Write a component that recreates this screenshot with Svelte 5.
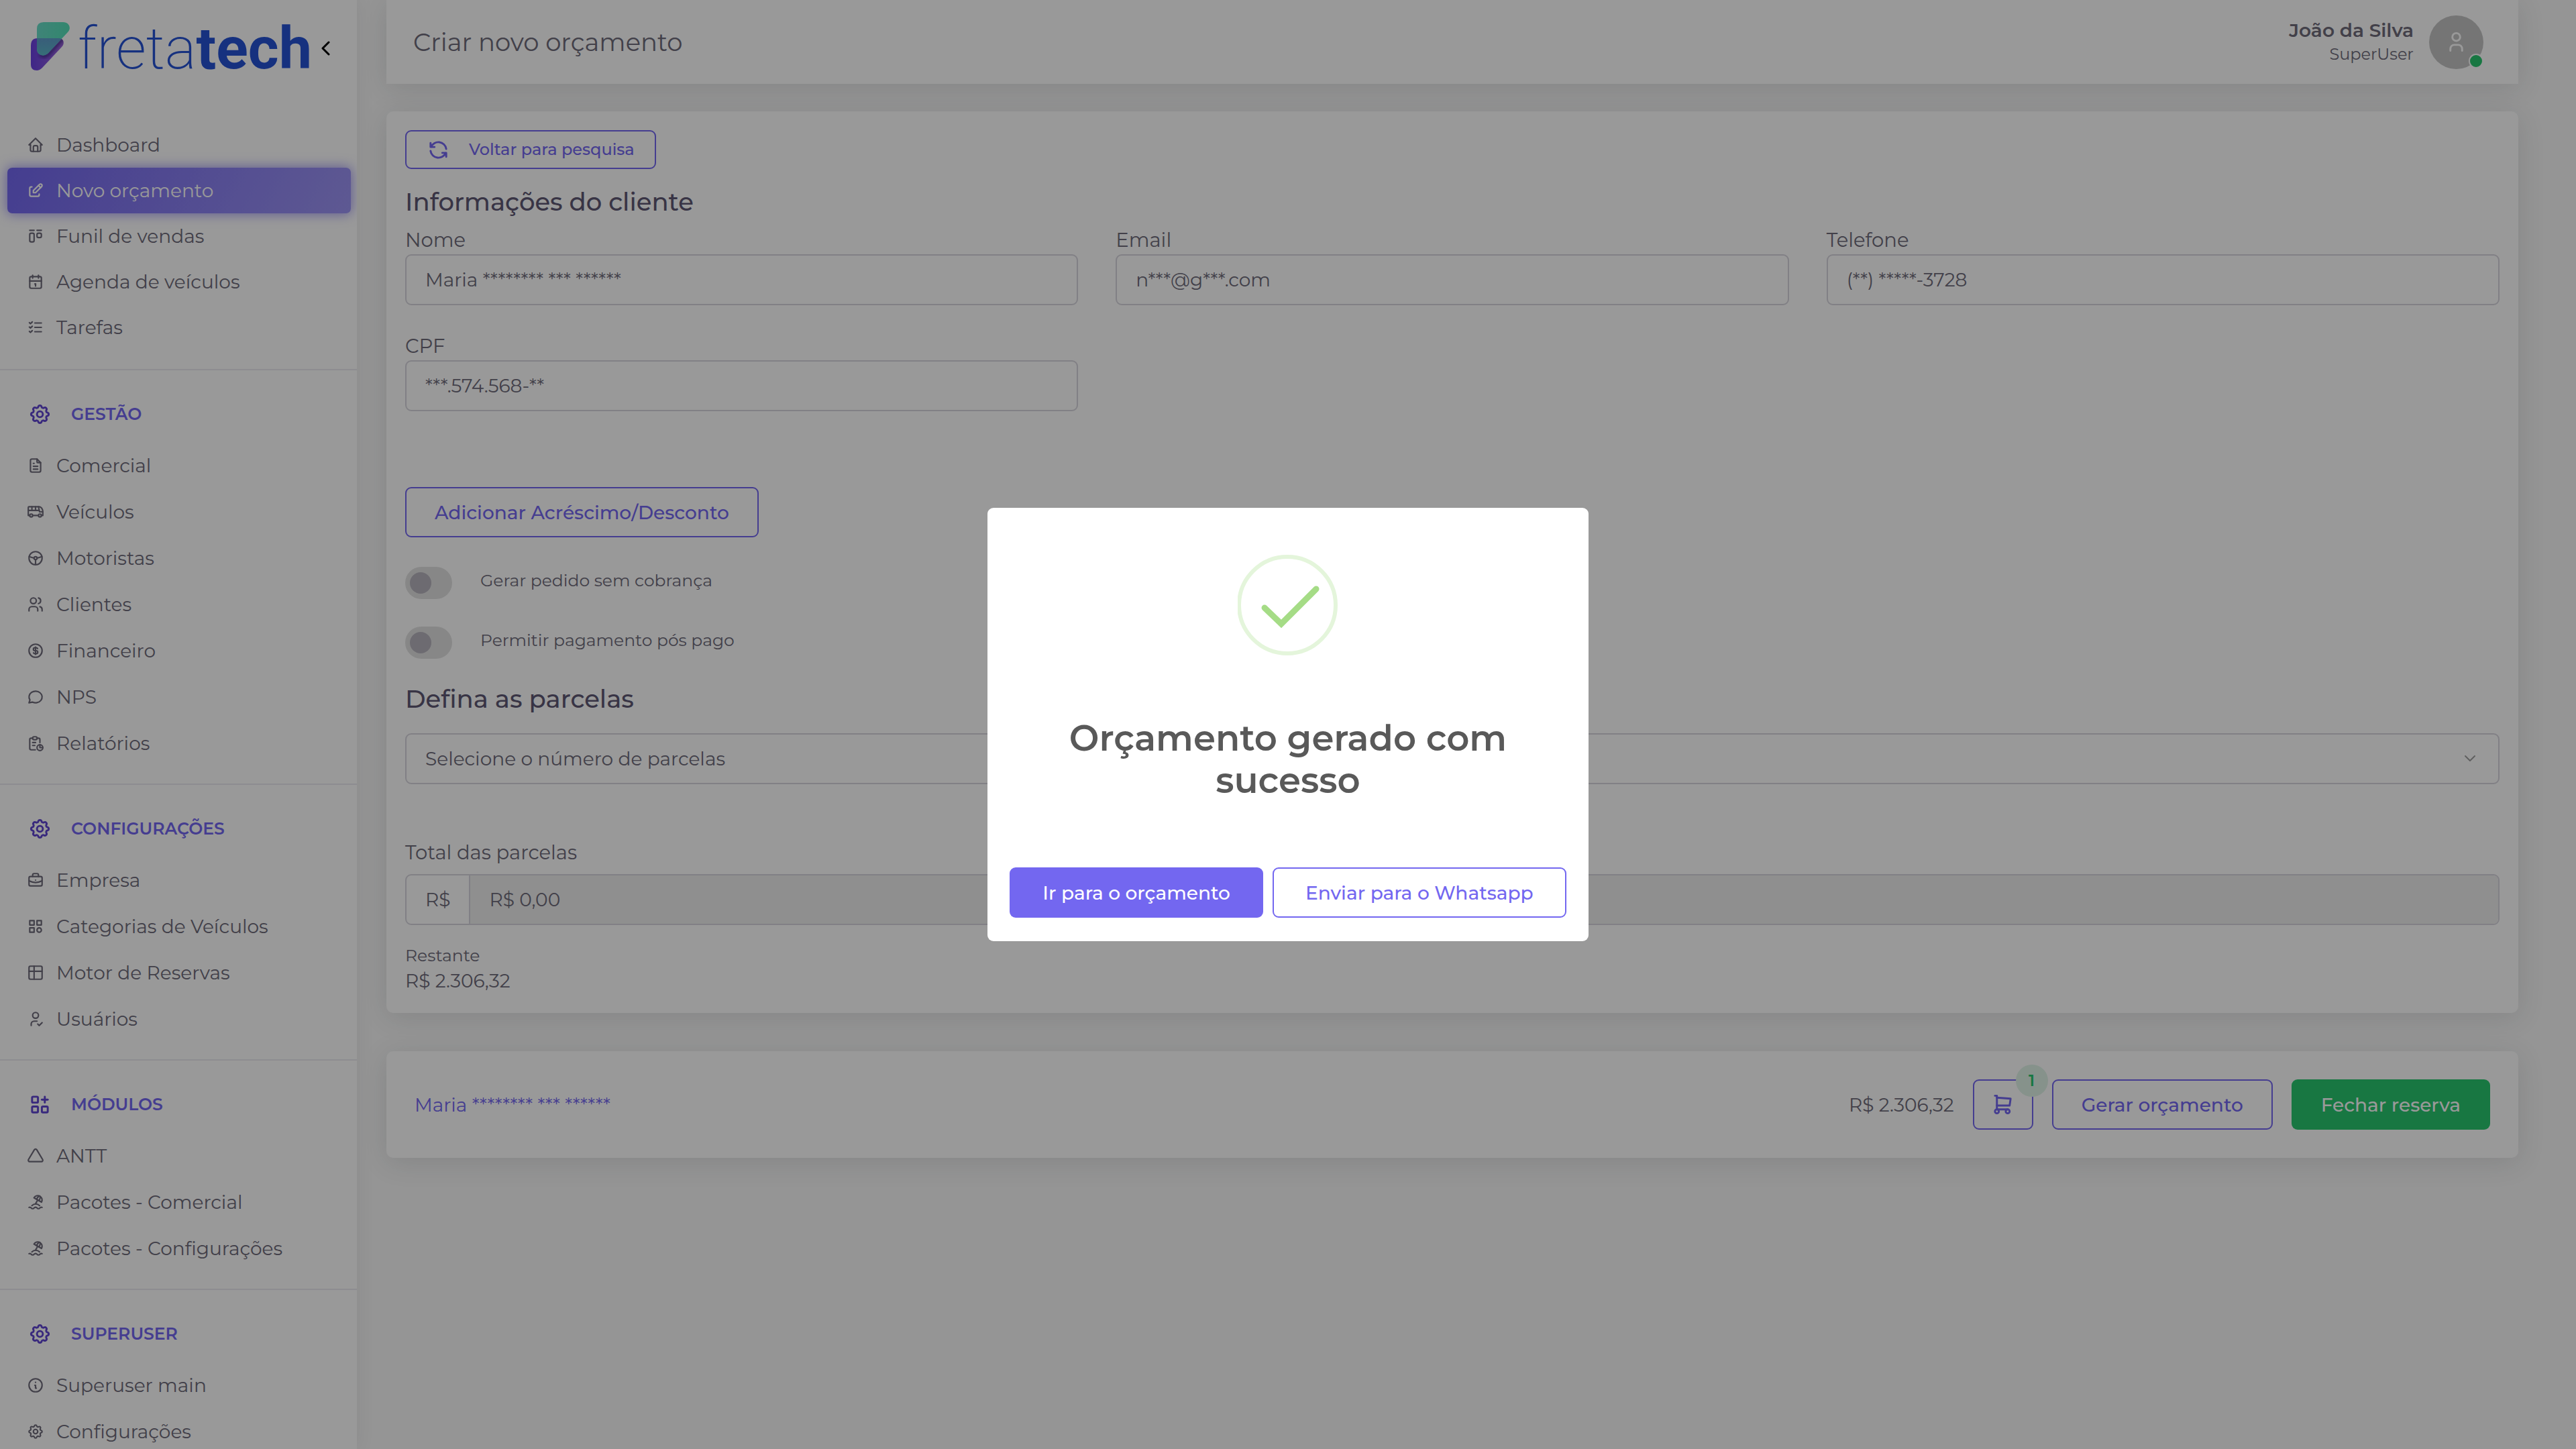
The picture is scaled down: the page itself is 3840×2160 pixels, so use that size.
<script lang="ts">
  type NavItem = { label: string; icon: string; href: string };
  type NavSection = { title: string; icon: string; items: NavItem[] };

  const icons: Record<string, string[]> = {
    home: ['M5 12h-2l9 -9l9 9h-2', 'M5 12v7a2 2 0 0 0 2 2h10a2 2 0 0 0 2 -2v-7', 'M9 21v-6a2 2 0 0 1 2 -2h2a2 2 0 0 1 2 2v6'],
    edit: ['M7 7h-1a2 2 0 0 0 -2 2v9a2 2 0 0 0 2 2h9a2 2 0 0 0 2 -2v-1', 'M20.385 6.585a2.1 2.1 0 0 0 -2.97 -2.97l-8.415 8.385v3h3l8.385 -8.415z', 'M16 5l3 3'],
    kanban: ['M4 4h6', 'M14 4h6', 'M4 10a2 2 0 0 1 2 -2h2a2 2 0 0 1 2 2v8a2 2 0 0 1 -2 2h-2a2 2 0 0 1 -2 -2z', 'M14 10a2 2 0 0 1 2 -2h2a2 2 0 0 1 2 2v2a2 2 0 0 1 -2 2h-2a2 2 0 0 1 -2 -2z'],
    calendar: ['M4 7a2 2 0 0 1 2 -2h12a2 2 0 0 1 2 2v12a2 2 0 0 1 -2 2h-12a2 2 0 0 1 -2 -2z', 'M16 3v4', 'M8 3v4', 'M4 11h16', 'M11 15h1', 'M12 15v3'],
    tasks: ['M3.5 5.5l1.5 1.5l2.5 -2.5', 'M3.5 11.5l1.5 1.5l2.5 -2.5', 'M3.5 17.5l1.5 1.5l2.5 -2.5', 'M11 6h9', 'M11 12h9', 'M11 18h9'],
    settings: ['M10.325 4.317c.426 -1.756 2.924 -1.756 3.35 0a1.724 1.724 0 0 0 2.573 1.066c1.543 -.94 3.31 .826 2.37 2.37a1.724 1.724 0 0 0 1.065 2.572c1.756 .426 1.756 2.924 0 3.35a1.724 1.724 0 0 0 -1.066 2.573c.94 1.543 -.826 3.31 -2.37 2.37a1.724 1.724 0 0 0 -2.572 1.065c-.426 1.756 -2.924 1.756 -3.35 0a1.724 1.724 0 0 0 -2.573 -1.066c-1.543 .94 -3.31 -.826 -2.37 -2.37a1.724 1.724 0 0 0 -1.065 -2.572c-1.756 -.426 -1.756 -2.924 0 -3.35a1.724 1.724 0 0 0 1.066 -2.573c-.94 -1.543 .826 -3.31 2.37 -2.37c1 .608 2.296 .07 2.572 -1.065z', 'M9 12a3 3 0 1 0 6 0a3 3 0 0 0 -6 0'],
    file: ['M14 3v4a1 1 0 0 0 1 1h4', 'M17 21h-10a2 2 0 0 1 -2 -2v-14a2 2 0 0 1 2 -2h7l5 5v11a2 2 0 0 1 -2 2z', 'M9 9h1', 'M9 13h6', 'M9 17h6'],
    bus: ['M4 17a2 2 0 1 0 4 0a2 2 0 1 0 -4 0', 'M16 17a2 2 0 1 0 4 0a2 2 0 1 0 -4 0', 'M4 17h-2v-11a1 1 0 0 1 1 -1h14a5 7 0 0 1 5 7v5h-2m-4 0h-8', 'M16 5l1.5 7h4.5', 'M2 10h15', 'M7 5v5', 'M12 5v5'],
    wheel: ['M3 12a9 9 0 1 0 18 0a9 9 0 1 0 -18 0', 'M10 12a2 2 0 1 0 4 0a2 2 0 1 0 -4 0', 'M12 14v7', 'M10 12l-6.75 -2', 'M14 12l6.75 -2'],
    users: ['M5 7a4 4 0 1 0 8 0a4 4 0 1 0 -8 0', 'M3 21v-2a4 4 0 0 1 4 -4h4a4 4 0 0 1 4 4v2', 'M16 3.13a4 4 0 0 1 0 7.75', 'M21 21v-2a4 4 0 0 0 -3 -3.85'],
    coin: ['M3 12a9 9 0 1 0 18 0a9 9 0 1 0 -18 0', 'M14.8 9a2 2 0 0 0 -1.8 -1h-2a2 2 0 1 0 0 4h2a2 2 0 1 1 0 4h-2a2 2 0 0 1 -1.8 -1', 'M12 7v10'],
    message: ['M3 20l1.3 -3.9c-2.324 -3.437 -1.426 -7.872 2.1 -10.374c3.526 -2.501 8.59 -2.296 11.845 .48c3.255 2.777 3.695 7.266 1.029 10.501c-2.666 3.235 -7.615 4.215 -11.574 2.293l-4.7 1'],
    report: ['M8 5h-2a2 2 0 0 0 -2 2v12a2 2 0 0 0 2 2h5.697', 'M18 14v4h4', 'M18 11v-4a2 2 0 0 0 -2 -2h-2', 'M8 5a2 2 0 0 1 2 -2h2a2 2 0 0 1 0 4h-2a2 2 0 0 1 -2 -2z', 'M14 18a4 4 0 1 0 8 0a4 4 0 1 0 -8 0', 'M8 11h4', 'M8 15h3'],
    briefcase: ['M3 9a2 2 0 0 1 2 -2h14a2 2 0 0 1 2 2v9a2 2 0 0 1 -2 2h-14a2 2 0 0 1 -2 -2z', 'M8 7v-2a2 2 0 0 1 2 -2h4a2 2 0 0 1 2 2v2', 'M12 12v.01', 'M3 13a20 20 0 0 0 18 0'],
    category: ['M4 4h6v6h-6z', 'M14 4h6v6h-6z', 'M4 14h6v6h-6z', 'M14 17a3 3 0 1 0 6 0a3 3 0 1 0 -6 0'],
    table: ['M3 5a2 2 0 0 1 2 -2h14a2 2 0 0 1 2 2v14a2 2 0 0 1 -2 2h-14a2 2 0 0 1 -2 -2v-14z', 'M3 10h18', 'M10 3v18'],
    userCheck: ['M8 7a4 4 0 1 0 8 0a4 4 0 0 0 -8 0', 'M6 21v-2a4 4 0 0 1 4 -4h4', 'M15 19l2 2l4 -4'],
    gridAdd: ['M4 5a1 1 0 0 1 1 -1h4a1 1 0 0 1 1 1v4a1 1 0 0 1 -1 1h-4a1 1 0 0 1 -1 -1z', 'M4 15a1 1 0 0 1 1 -1h4a1 1 0 0 1 1 1v4a1 1 0 0 1 -1 1h-4a1 1 0 0 1 -1 -1z', 'M14 15a1 1 0 0 1 1 -1h4a1 1 0 0 1 1 1v4a1 1 0 0 1 -1 1h-4a1 1 0 0 1 -1 -1z', 'M14 7h6', 'M17 4v6'],
    triangle: ['M10.363 3.591l-8.106 13.534a1.914 1.914 0 0 0 1.636 2.871h16.214a1.914 1.914 0 0 0 1.636 -2.87l-8.106 -13.536a1.914 1.914 0 0 0 -3.274 0z'],
    beach: ['M17.553 16.75a7.5 7.5 0 0 0 -10.606 0', 'M18 3.804a6 6 0 0 0 -8.196 2.196l10.392 6a6 6 0 0 0 -2.196 -8.196z', 'M16.732 10c1.658 -2.87 2.225 -5.644 1.268 -6.196c-.957 -.552 -3.075 1.326 -4.732 4.196', 'M15 9l-3 5.196', 'M3 19.25a2.4 2.4 0 0 1 1 -.25a2.4 2.4 0 0 1 2 1a2.4 2.4 0 0 0 2 1a2.4 2.4 0 0 0 2 -1a2.4 2.4 0 0 1 2 -1a2.4 2.4 0 0 1 2 1a2.4 2.4 0 0 0 2 1a2.4 2.4 0 0 0 2 -1a2.4 2.4 0 0 1 2 -1a2.4 2.4 0 0 1 1 .25'],
    info: ['M3 12a9 9 0 1 0 18 0a9 9 0 1 0 -18 0', 'M12 8h.01', 'M11 12h1v4h1'],
    refresh: ['M20 11a8.1 8.1 0 0 0 -15.5 -2m-.5 -4v4h4', 'M4 13a8.1 8.1 0 0 0 15.5 2m.5 4v-4h-4'],
    cart: ['M4 19a2 2 0 1 0 4 0a2 2 0 1 0 -4 0', 'M15 19a2 2 0 1 0 4 0a2 2 0 1 0 -4 0', 'M17 17h-11v-14h-2', 'M6 5l14 1l-1 7h-13'],
    user: ['M8 7a4 4 0 1 0 8 0a4 4 0 0 0 -8 0', 'M6 21v-2a4 4 0 0 1 4 -4h4a4 4 0 0 1 4 4v2'],
  };

  const mainItems: NavItem[] = [
    { label: 'Dashboard', icon: 'home', href: '#dashboard' },
    { label: 'Novo orçamento', icon: 'edit', href: '#novo-orcamento' },
    { label: 'Funil de vendas', icon: 'kanban', href: '#funil' },
    { label: 'Agenda de veículos', icon: 'calendar', href: '#agenda' },
    { label: 'Tarefas', icon: 'tasks', href: '#tarefas' },
  ];

  const sections: NavSection[] = [
    {
      title: 'GESTÃO',
      icon: 'settings',
      items: [
        { label: 'Comercial', icon: 'file', href: '#comercial' },
        { label: 'Veículos', icon: 'bus', href: '#veiculos' },
        { label: 'Motoristas', icon: 'wheel', href: '#motoristas' },
        { label: 'Clientes', icon: 'users', href: '#clientes' },
        { label: 'Financeiro', icon: 'coin', href: '#financeiro' },
        { label: 'NPS', icon: 'message', href: '#nps' },
        { label: 'Relatórios', icon: 'report', href: '#relatorios' },
      ],
    },
    {
      title: 'CONFIGURAÇÕES',
      icon: 'settings',
      items: [
        { label: 'Empresa', icon: 'briefcase', href: '#empresa' },
        { label: 'Categorias de Veículos', icon: 'category', href: '#categorias' },
        { label: 'Motor de Reservas', icon: 'table', href: '#motor' },
        { label: 'Usuários', icon: 'userCheck', href: '#usuarios' },
      ],
    },
    {
      title: 'MÓDULOS',
      icon: 'gridAdd',
      items: [
        { label: 'ANTT', icon: 'triangle', href: '#antt' },
        { label: 'Pacotes - Comercial', icon: 'beach', href: '#pacotes' },
        { label: 'Pacotes - Configurações', icon: 'beach', href: '#pacotes-config' },
      ],
    },
    {
      title: 'SUPERUSER',
      icon: 'settings',
      items: [
        { label: 'Superuser main', icon: 'info', href: '#superuser' },
        { label: 'Configurações', icon: 'settings', href: '#config' },
      ],
    },
  ];

  let active = $state('#novo-orcamento');
  let showModal = $state(true);
  let semCobranca = $state(false);
  let posPago = $state(false);

  let cliente = $state({
    nome: 'Maria ******** *** ******',
    email: 'n***@g***.com',
    telefone: '(**) *****-3728',
    cpf: '***.574.568-**',
  });

  const total = 'R$ 2.306,32';
</script>

{#snippet icon(name: string)}
  <svg class="icon" viewBox="0 0 24 24" fill="none" stroke="currentColor" stroke-width="2" stroke-linecap="round" stroke-linejoin="round" aria-hidden="true">
    {#each icons[name] as d}
      <path {d} />
    {/each}
  </svg>
{/snippet}

{#snippet navLink(item: NavItem)}
  <li>
    <a class="nav-link" class:active={active === item.href} href={item.href} onclick={() => (active = item.href)}>
      {@render icon(item.icon)}
      <span>{item.label}</span>
    </a>
  </li>
{/snippet}

<div class="layout">
  <aside class="sidebar">
    <div class="brand">
      <svg class="brand-mark" viewBox="0 0 58 72" aria-hidden="true">
        <defs>
          <linearGradient id="purple" x1="0" y1="0" x2="1" y2="0">
            <stop offset="0" stop-color="#6a40e2" />
            <stop offset="1" stop-color="#a56fd6" />
          </linearGradient>
          <linearGradient id="teal" x1="0" y1="0" x2="1" y2="0">
            <stop offset="0" stop-color="#6edccb" />
            <stop offset="1" stop-color="#54e0b8" />
          </linearGradient>
          <linearGradient id="overlap" x1="0" y1="0" x2="0" y2="1">
            <stop offset="0" stop-color="#5f9ccb" />
            <stop offset="1" stop-color="#58cfc6" />
          </linearGradient>
          <filter id="soft">
            <feGaussianBlur stdDeviation="2" />
          </filter>
          <clipPath id="teal-shape">
            <path d="M9 10q0 -10 10 -10h29c9 0 13 9 7 15l-29 31c-6 6 -17 4 -17 -6z" />
          </clipPath>
          <clipPath id="purple-shape">
            <path d="M0 35q0 -11 10 -11h32c7 0 9 8 4 13l-29 31q-4 4 -8 4c-6 0 -9 -3 -9 -9z" />
          </clipPath>
        </defs>
        <g clip-path="url(#purple-shape)">
          <rect width="58" height="72" fill="url(#purple)" />
          <path d="M13 48q8 6 14 -1l29 -31" fill="none" stroke="#2c1a70" stroke-opacity="0.6" stroke-width="5" filter="url(#soft)" />
        </g>
        <g clip-path="url(#teal-shape)">
          <rect width="58" height="72" fill="url(#teal)" />
          <path fill="url(#overlap)" d="M0 35q0 -11 10 -11h32c7 0 9 8 4 13l-29 31q-4 4 -8 4c-6 0 -9 -3 -9 -9z" />
        </g>
      </svg>
      <span class="brand-name">freta<b>tech</b></span>
      <button class="collapse" aria-label="Recolher menu">
        <svg viewBox="0 0 14 22" fill="none" stroke="currentColor" stroke-width="3" stroke-linecap="round" stroke-linejoin="round">
          <path d="M12 2l-9 9l9 9" />
        </svg>
      </button>
    </div>

    <nav>
      <ul class="nav-list main-list">
        {#each mainItems as item}
          {@render navLink(item)}
        {/each}
      </ul>
      {#each sections as section}
        <section class="nav-section">
          <h2 class="nav-title">
            {@render icon(section.icon)}
            <span>{section.title}</span>
          </h2>
          <ul class="nav-list">
            {#each section.items as item}
              {@render navLink(item)}
            {/each}
          </ul>
        </section>
      {/each}
    </nav>
  </aside>

  <main class="content">
    <header class="topbar">
      <h1>Criar novo orçamento</h1>
      <div class="user">
        <div class="user-info">
          <strong>João da Silva</strong>
          <span>SuperUser</span>
        </div>
        <div class="avatar">
          {@render icon('user')}
          <span class="status"></span>
        </div>
      </div>
    </header>

    <section class="card">
      <button class="btn btn-outline btn-small">
        {@render icon('refresh')}
        Voltar para pesquisa
      </button>

      <h3 class="card-title">Informações do cliente</h3>
      <div class="fields">
        <div class="field">
          <label for="nome">Nome</label>
          <input id="nome" type="text" bind:value={cliente.nome} />
        </div>
        <div class="field">
          <label for="email">Email</label>
          <input id="email" type="text" bind:value={cliente.email} />
        </div>
        <div class="field">
          <label for="telefone">Telefone</label>
          <input id="telefone" type="text" bind:value={cliente.telefone} />
        </div>
        <div class="field">
          <label for="cpf">CPF</label>
          <input id="cpf" type="text" bind:value={cliente.cpf} />
        </div>
      </div>

      <button class="btn btn-outline btn-adjust">Adicionar Acréscimo/Desconto</button>

      <div class="switches">
        <label class="switch">
          <input type="checkbox" bind:checked={semCobranca} />
          <span>Gerar pedido sem cobrança</span>
        </label>
        <label class="switch">
          <input type="checkbox" bind:checked={posPago} />
          <span>Permitir pagamento pós pago</span>
        </label>
      </div>

      <h3 class="card-title parcelas-title" id="parcelas-title">Defina as parcelas</h3>
      <div class="select">
        <select aria-labelledby="parcelas-title">
          <option>Selecione o número de parcelas</option>
        </select>
        <svg viewBox="0 0 18 12" fill="none" stroke="currentColor" stroke-width="2" stroke-linecap="round" stroke-linejoin="round" aria-hidden="true">
          <path d="M2 2l7 7l7 -7" />
        </svg>
      </div>

      <label class="total-label" for="total">Total das parcelas</label>
      <div class="input-group">
        <span class="prefix">R$</span>
        <input id="total" type="text" value="R$ 0,00" disabled />
      </div>

      <div class="remaining">
        <small>Restante</small>
        <span>{total}</span>
      </div>
    </section>

    <footer class="card summary">
      <a href="#cliente">{cliente.nome}</a>
      <div class="summary-actions">
        <span>{total}</span>
        <button class="btn btn-outline btn-cart" aria-label="Carrinho">
          {@render icon('cart')}
          <span class="badge">1</span>
        </button>
        <button class="btn btn-outline">Gerar orçamento</button>
        <button class="btn btn-success">Fechar reserva</button>
      </div>
    </footer>
  </main>
</div>

{#if showModal}
  <div class="overlay">
    <div class="modal" role="dialog" aria-modal="true" aria-labelledby="modal-title">
      <svg class="success-icon" viewBox="0 0 150 150" fill="none" aria-hidden="true">
        <circle cx="74" cy="75" r="72" stroke="#e4f5db" stroke-width="6" />
        <path d="M40 79l25 24l52 -52" stroke="#a5dc86" stroke-width="9" stroke-linecap="round" />
      </svg>
      <h2 id="modal-title">Orçamento gerado com sucesso</h2>
      <div class="modal-actions">
        <button class="btn btn-primary" onclick={() => (showModal = false)}>Ir para o orçamento</button>
        <button class="btn btn-outline" onclick={() => (showModal = false)}>Enviar para o Whatsapp</button>
      </div>
    </div>
  </div>
{/if}

<style>
  :global(body) {
    margin: 0;
    background: #f8f8f8;
    overflow: hidden;
  }

  .layout,
  .overlay {
    font-family: 'Montserrat', 'Inter', sans-serif;
    font-size: 28px;
    line-height: 32px;
    color: #6e6b7b;
  }

  .layout *,
  .overlay * {
    box-sizing: border-box;
  }

  .layout {
    display: flex;
    height: 100vh;
    overflow: hidden;
  }

  h1,
  h2,
  h3,
  ul {
    margin: 0;
    padding: 0;
  }

  button,
  input,
  select {
    font: inherit;
    color: inherit;
  }

  .icon {
    flex: none;
    width: 35px;
    height: 35px;
  }

  /* sidebar */
  .sidebar {
    flex: none;
    width: 532px;
    overflow: hidden;
    background: #fff;
    box-shadow: 0 0 26px rgba(34, 41, 47, 0.08);
  }

  .brand {
    display: flex;
    align-items: center;
    height: 138px;
    padding-left: 46px;
    margin-bottom: 44px;
  }

  .brand-mark {
    width: 58px;
    height: 72px;
    margin-right: 12px;
  }

  .brand-name {
    width: 362px;
    padding-top: 6px;
    font-family: Roboto, sans-serif;
    font-size: 88px;
    font-weight: 200;
    line-height: 72px;
    color: #2552d4;
  }

  .brand-name b {
    font-weight: 700;
  }

  .collapse {
    padding: 6px 0 0;
    border: 0;
    background: none;
    color: #000;
    cursor: pointer;
  }

  .collapse svg {
    display: block;
    width: 14px;
    height: 22px;
  }

  .nav-list {
    display: flex;
    flex-direction: column;
    gap: 1px;
    padding: 0 9px 26px 11px;
    list-style: none;
  }

  .main-list {
    gap: 0;
    padding-bottom: 28px;
  }

  .nav-link {
    display: flex;
    align-items: center;
    gap: 18px;
    height: 68px;
    padding-left: 29px;
    border-radius: 7px;
    color: #6e6b7b;
    text-decoration: none;
  }

  .nav-link .icon {
    width: 26px;
    height: 26px;
  }

  .nav-link.active {
    background: linear-gradient(118deg, #7367f0, rgba(115, 103, 240, 0.7));
    box-shadow: 0 0 18px 1px rgba(115, 103, 240, 0.7);
    color: #fff;
  }

  .nav-title {
    display: flex;
    align-items: center;
    gap: 29px;
    height: 110px;
    padding: 50px 0 28px 42px;
    border-top: 2px solid #ebe9f1;
    font-size: 25px;
    font-weight: 600;
    color: #7367f0;
  }

  .nav-title .icon {
    color: #5f45d0;
  }

  /* content */
  .content {
    flex: 1;
    min-width: 0;
    padding: 0 86px 0 44px;
  }

  .topbar,
  .card {
    background: #fff;
    box-shadow: 0 7px 42px rgba(34, 41, 47, 0.12);
  }

  .topbar {
    display: flex;
    align-items: center;
    justify-content: space-between;
    height: 125px;
    padding: 0 52px 0 40px;
    margin-bottom: 41px;
  }

  .topbar h1 {
    font-size: 37px;
    font-weight: 400;
  }

  .user {
    display: flex;
    align-items: center;
    gap: 23px;
  }

  .user-info {
    display: flex;
    flex-direction: column;
    text-align: right;
    line-height: 36px;
  }

  .user-info strong {
    font-weight: 600;
  }

  .user-info span {
    font-size: 24px;
  }

  .avatar {
    position: relative;
    display: grid;
    place-items: center;
    width: 81px;
    height: 80px;
    border-radius: 50%;
    background: #c3c3c3;
    color: #fff;
  }

  .status {
    position: absolute;
    right: 0;
    bottom: 1px;
    width: 22px;
    height: 22px;
    border: 2px solid #fff;
    border-radius: 50%;
    background: #28c76f;
  }

  .card {
    padding: 28px 28px 32px;
    border-radius: 10px;
  }

  .card-title {
    margin: 28px 0 20px;
    font-size: 37px;
    font-weight: 500;
    line-height: 42px;
    color: #5e5873;
  }

  .btn {
    display: inline-flex;
    align-items: center;
    justify-content: center;
    height: 75px;
    padding: 0 42px;
    border: 2px solid transparent;
    border-radius: 9px;
    background: none;
    font-weight: 500;
    white-space: nowrap;
    cursor: pointer;
  }

  .btn-outline {
    border-color: #7367f0;
    color: #7367f0;
  }

  .btn-primary {
    background: #7367f0;
    color: #fff;
  }

  .btn-success {
    background: #28c76f;
    color: #fff;
  }

  .btn-small {
    gap: 28px;
    height: 58px;
    padding: 0 30px;
    font-size: 24px;
  }

  .fields {
    display: grid;
    grid-template-columns: repeat(3, 1fr);
    gap: 45px 56px;
  }

  .field {
    display: flex;
    flex-direction: column;
    gap: 5px;
  }

  .field input,
  .select select {
    width: 100%;
    height: 76px;
    padding: 0 28px;
    border: 2px solid #d8d6de;
    border-radius: 9px;
    background: #fff;
  }

  .btn-adjust {
    margin-top: 113px;
  }

  .switches {
    display: flex;
    flex-direction: column;
    gap: 41px;
    margin-top: 44px;
  }

  .switch {
    display: flex;
    gap: 42px;
    font-size: 25px;
    line-height: 40px;
  }

  .switch input {
    appearance: none;
    display: flex;
    align-items: center;
    width: 70px;
    height: 48px;
    margin: 0;
    padding: 0 7px;
    border-radius: 24px;
    background: #e2e2e2;
  }

  .switch input::before {
    content: '';
    width: 32px;
    height: 32px;
    border-radius: 50%;
    background: #b6b3bd;
  }

  .switch input:checked {
    justify-content: flex-end;
    background: #7367f0;
  }

  .parcelas-title {
    margin: 39px 0 30px;
  }

  .select {
    position: relative;
  }

  .select select {
    appearance: none;
  }

  .select svg {
    position: absolute;
    top: 32px;
    right: 35px;
    width: 18px;
    height: 12px;
    color: #a0a0a0;
    pointer-events: none;
  }

  .field label,
  .total-label {
    font-size: 29px;
  }

  .total-label {
    display: block;
    margin: 86px 0 16px;
  }

  .input-group {
    display: flex;
    height: 76px;
    border: 2px solid #d8d6de;
    border-radius: 9px;
    overflow: hidden;
  }

  .prefix {
    display: flex;
    align-items: center;
    padding: 0 28px;
    border-right: 2px solid #d8d6de;
  }

  .input-group input {
    flex: 1;
    padding: 0 28px;
    border: 0;
    background: #efefef;
  }

  .remaining {
    display: flex;
    flex-direction: column;
    gap: 6px;
    margin-top: 29px;
  }

  .remaining small {
    font-size: 25px;
  }

  .summary {
    display: flex;
    align-items: center;
    justify-content: space-between;
    margin-top: 57px;
    padding: 42px 42px;
  }

  .summary a {
    color: #7367f0;
    text-decoration: none;
  }

  .summary-actions {
    display: flex;
    align-items: center;
    gap: 28px;
  }

  .btn-cart {
    position: relative;
    width: 90px;
    padding: 0;
  }

  .badge {
    position: absolute;
    top: -24px;
    right: -24px;
    width: 48px;
    height: 48px;
    border-radius: 50%;
    background: #dff3e8;
    font-size: 24px;
    font-weight: 600;
    line-height: 48px;
    color: #28c76f;
  }

  /* modal */
  .overlay {
    position: fixed;
    inset: 0;
    display: grid;
    place-items: center;
    background: rgba(0, 0, 0, 0.4);
  }

  .modal {
    display: flex;
    flex-direction: column;
    align-items: center;
    width: 896px;
    padding: 70px 35px 35px;
    border-radius: 9px;
    background: #fff;
  }

  .success-icon {
    width: 150px;
    height: 150px;
  }

  .modal h2 {
    max-width: 760px;
    margin: 92px 0 98px;
    font-size: 53px;
    font-weight: 600;
    line-height: 63px;
    text-align: center;
    color: #595959;
  }

  .modal-actions {
    display: flex;
    gap: 14px;
  }

  .modal-actions .btn {
    padding: 0 47px;
  }
</style>
